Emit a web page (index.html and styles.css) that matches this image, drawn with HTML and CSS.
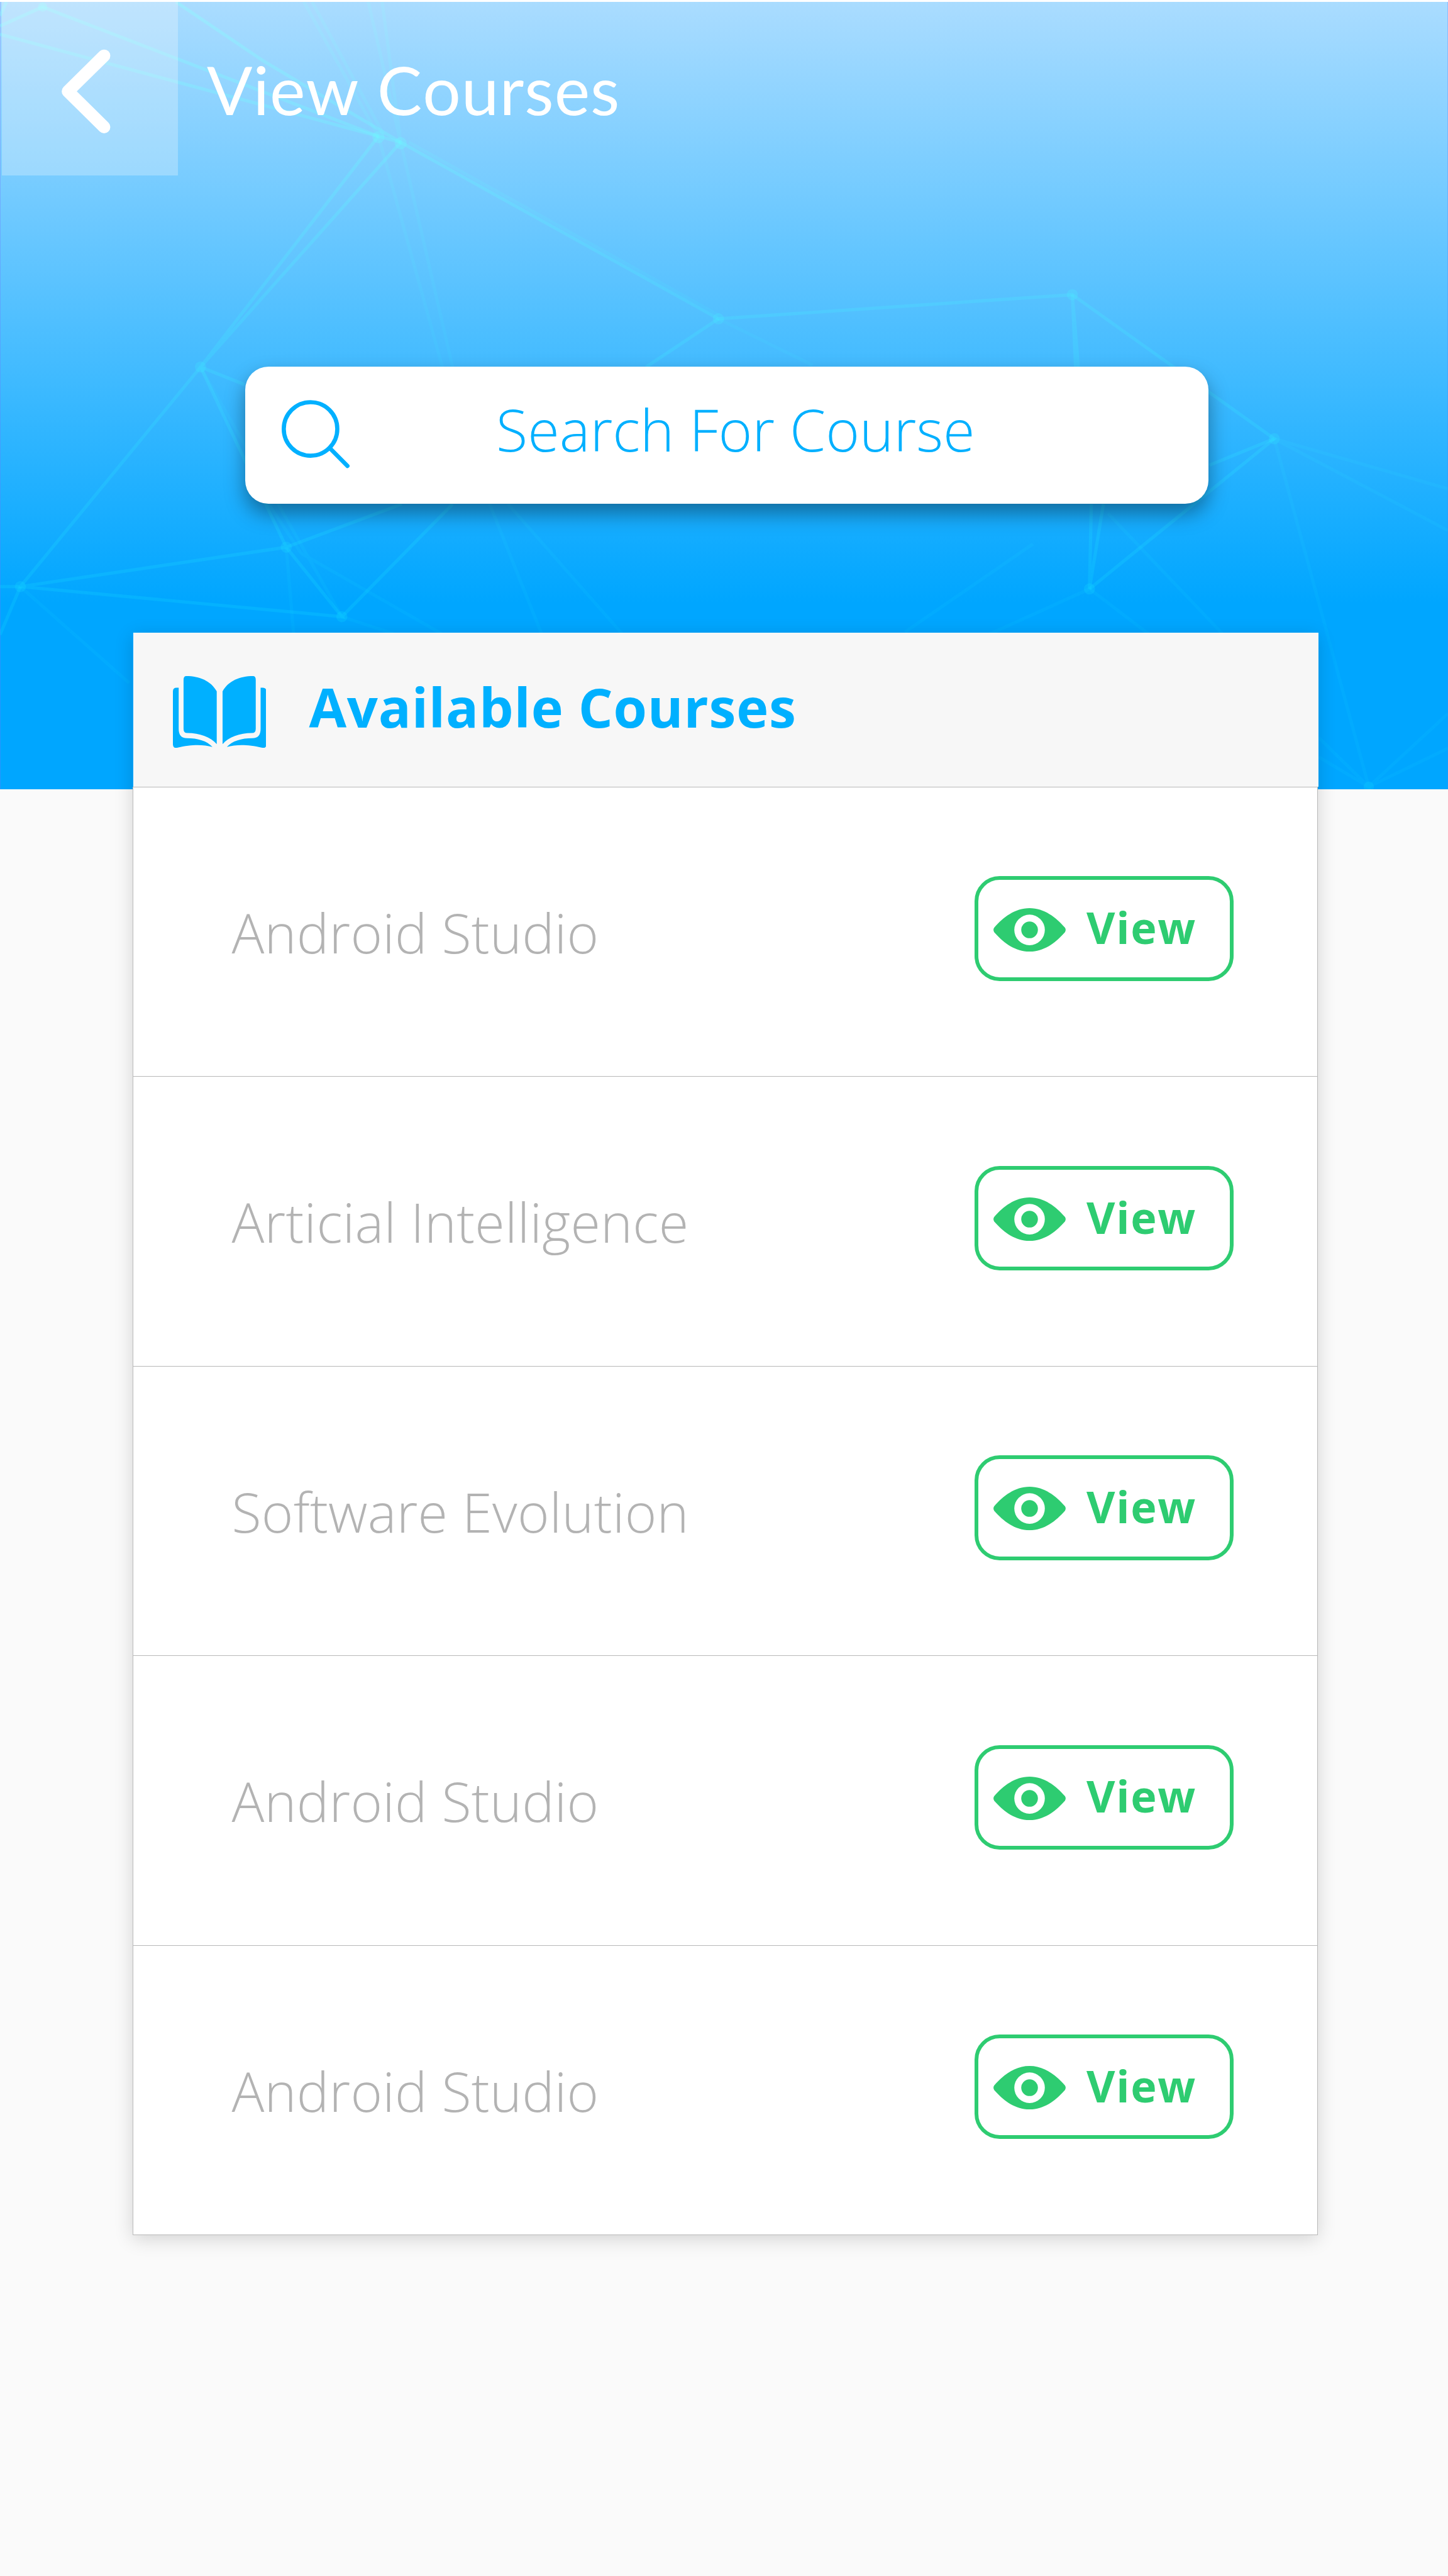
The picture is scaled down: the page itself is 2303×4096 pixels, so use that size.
FILE: index.html
```html
<!DOCTYPE html>
<html lang="en">
<head>
<meta charset="utf-8">
<title>View Courses</title>
<link rel="stylesheet" href="styles.css">
</head>
<body>
<svg class="defs" width="0" height="0" aria-hidden="true">
  <symbol id="eye" viewBox="0 0 156 94">
    <path fill-rule="evenodd" d="M78 0C110 0 135 20 154.500 42Q157.500 47 154.500 52C135 74 110 94 78 94C46 94 21 74 1.500 52Q-1.500 47 1.500 42C21 20 46 0 78 0ZM78 14A33 33 0 1 0 78 80A33 33 0 1 0 78 14Z"/>
    <circle cx="78" cy="47" r="18"/>
  </symbol>
</svg>
<div class="page">
  <header class="hero">
    <svg class="network" viewBox="0 0 3126 1700" preserveAspectRatio="none" aria-hidden="true">
      <linearGradient id="glow" gradientUnits="userSpaceOnUse" x1="0" y1="0" x2="0" y2="1300">
        <stop offset="0" stop-color="#8cffff" stop-opacity=".36"/>
        <stop offset=".5" stop-color="#46f0ff" stop-opacity=".22"/>
        <stop offset="1" stop-color="#14e6ff" stop-opacity=".18"/>
      </linearGradient>
      <g class="bright">
        <path d="M0 52L92 11L817 290L865 303L1551 684L2315 632L2751 943L2352 1267"/>
        <path d="M0 70L817 290M380 0L571 129L865 303M0 30L14 0"/>
        <path d="M817 290L433 788L865 303M433 788L44 1262L618 1177L738 1327L44 1262H0M433 788L528 826M433 788L618 1177L867 1084M977 1084L738 1327"/>
        <path d="M1551 684L1395 788M2315 632L2328 788M2315 632L2322 788M2751 943L2611 1000M2382 1084L2352 1267L2356 1084M44 1262L0 1366"/>
      </g>
      <g class="dim">
        <path d="M656 0L817 290M674 0L830 290M795 0L865 303L825 0M865 303L977 788M817 290L955 788M883 303L1551 676"/>
        <path d="M433 788L738 1327M580 1084L650 1190L957 1366M618 1177L634 1366M738 1327L857 1366M44 1262L279 1470M1057 1084L1170 1366M1097 1084L1345 1366"/>
        <path d="M2751 943L3126 1051M2751 943L3126 1141M2751 943L2955 1694L2847 1630M2847 1588L2955 1694L3126 1536M2955 1694L3126 1611M2352 1267L2133 1366M2352 1267L2482 1366M2392 1104L2641 1366M2230 1170L1954 1360M1551 684L1754 784"/>
      </g>
      <g class="nodes">
        <circle cx="92" cy="11" r="10"/><circle cx="817" cy="292" r="13"/><circle cx="865" cy="305" r="13"/><circle cx="433" cy="788" r="12"/><circle cx="1551" cy="684" r="12"/><circle cx="2315" cy="632" r="12"/><circle cx="2751" cy="943" r="12"/><circle cx="2352" cy="1267" r="12"/><circle cx="618" cy="1177" r="12"/><circle cx="44" cy="1262" r="12"/><circle cx="738" cy="1327" r="12"/><circle cx="2955" cy="1694" r="11"/>
      </g>
    </svg>
    <div class="topbar">
      <button class="back" aria-label="Back">
        <svg class="chevron" viewBox="0 0 106 180"><path d="M93 13L15 90L93 167"/></svg>
      </button>
      <h1 class="title">View Courses</h1>
    </div>
    <div class="search">
      <svg class="search-icon" viewBox="0 0 147 148"><circle cx="62.300" cy="62.500" r="57.800"/><path d="M104 104L142 142.500"/></svg>
      <span class="search-text">Search For Course</span>
    </div>
  </header>
  <main class="card">
    <div class="card-head">
      <svg class="book" viewBox="0 0 202 155">
        <g id="half"><path d="M29 0C57 0 82 10 94.700 33V147C82 132 58 123 31 123Q23 123 23 114V8Q23 0 29 0Z"/><path d="M12.500 25V114Q12.500 134 30 134C54 134 74 140 85.500 153C65 148 42 147 8 155Q0 156 0 147V33Q0 25 8 25Z"/></g>
        <use href="#half" transform="translate(202 0) scale(-1 1)"/>
      </svg>
      <h2 class="card-title">Available Courses</h2>
    </div>
    <ul class="list">
      <li class="row"><span class="name">Android Studio</span><button class="view"><svg class="eye"><use href="#eye"/></svg><span class="label">View</span></button></li>
      <li class="row"><span class="name">Articial Intelligence</span><button class="view"><svg class="eye"><use href="#eye"/></svg><span class="label">View</span></button></li>
      <li class="row"><span class="name">Software Evolution</span><button class="view"><svg class="eye"><use href="#eye"/></svg><span class="label">View</span></button></li>
      <li class="row"><span class="name">Android Studio</span><button class="view"><svg class="eye"><use href="#eye"/></svg><span class="label">View</span></button></li>
      <li class="row"><span class="name">Android Studio</span><button class="view"><svg class="eye"><use href="#eye"/></svg><span class="label">View</span></button></li>
    </ul>
  </main>
</div>
</body>
</html>
```
FILE: styles.css
```css
* { box-sizing: border-box; }
body { margin: 0; background: #fff; font-family: "Open Sans", sans-serif; }
h1, h2, ul { margin: 0; padding: 0; }
button { margin: 0; padding: 0; border: 0; background: none; font: inherit; }
.defs { display: none; }

.page {
  width: 2303px;
  height: 4096px;
  padding-top: 3px;
  overflow: hidden;
  background: linear-gradient(#fff 3px, #fafafa 3px);
}

.hero {
  position: relative;
  display: flex;
  flex-direction: column;
  height: 1252.400px;
  background: linear-gradient(#aadcff, #00a6ff 76.300%);
  box-shadow: inset 1px 0 rgba(110, 120, 255, .35), inset -1px 0 rgba(80, 120, 255, .3);
}
.network { position: absolute; inset: 0; width: 100%; height: 100%; fill: none; }
.bright { stroke: url(#glow); stroke-width: 7; }
.dim { stroke: url(#glow); stroke-width: 7; opacity: .42; }
.nodes { fill: url(#glow); }

.topbar { position: relative; display: flex; align-items: center; height: 276px; padding-left: 3px; }
.back {
  display: flex;
  align-items: center;
  width: 280px;
  height: 276px;
  padding: 9px 0 0 93.500px;
  background: rgba(250, 250, 250, .27);
}
.chevron { width: 78.100px; height: 132.600px; overflow: visible; fill: none; stroke: #fff; stroke-width: 27; stroke-linecap: round; stroke-linejoin: round; }
.title { padding: 2px 0 0 46px; font: 400 107px/1.2 Lato, sans-serif; font-kerning: none; letter-spacing: .95px; color: #fff; white-space: nowrap; }

.search {
  position: relative;
  display: flex;
  align-items: center;
  width: 1532.600px;
  height: 218.800px;
  margin: 303.700px 0 0 389.700px;
  padding-left: 58.500px;
  border-radius: 37px;
  background: #fff;
  box-shadow: 0 16px 32px rgba(0, 0, 0, .38);
}
.search-icon { width: 108.300px; height: 109px; margin-top: -4px; fill: none; stroke: #00b0ff; stroke-width: 9; stroke-linecap: round; }
.search-text { padding: 0 0 18px 232.500px; font-size: 92px; font-weight: 300; line-height: 1.3; color: #00b0ff; white-space: nowrap; }

.card { position: relative; width: 1885px; margin: -249px 0 0 211px; box-shadow: 0 6px 28px rgba(0, 0, 0, .16); }
.card-head {
  display: flex;
  align-items: center;
  width: 1885.400px;
  height: 244.600px;
  margin-left: 1px;
  padding-left: 62.700px;
  background: #f7f7f7;
}
.book { width: 148.700px; height: 114.200px; margin-top: 6px; fill: #00b0ff; }
.card-title { padding: 0 0 10px 68px; font-size: 86.400px; font-weight: 700; line-height: 1.3; letter-spacing: .8px; color: #00b0ff; white-space: nowrap; }

.list { list-style: none; border: 1px solid #bababa; border-top: 0; background: #fff; }
.row {
  display: flex;
  justify-content: space-between;
  align-items: center;
  height: 460.400px;
  padding: 0 133.500px 0 156.500px;
  border-top: 1px solid #b8b8b8;
}
.name { padding-top: 3px; font-size: 86.400px; font-weight: 300; line-height: 1.3; letter-spacing: .24px; color: #b3b3b3; white-space: nowrap; }
.view {
  display: flex;
  align-items: center;
  width: 411.500px;
  height: 166.500px;
  margin-bottom: 10px;
  padding-left: 24px;
  border: 6px solid #2ecc71;
  border-radius: 40px;
  color: #2ecc71;
}
.eye { width: 115px; height: 69.200px; margin-top: 3px; fill: currentColor; }
.label { padding: 0 0 4px 33px; font-size: 70px; font-weight: 700; line-height: 1.3; letter-spacing: 1.700px; }
```
